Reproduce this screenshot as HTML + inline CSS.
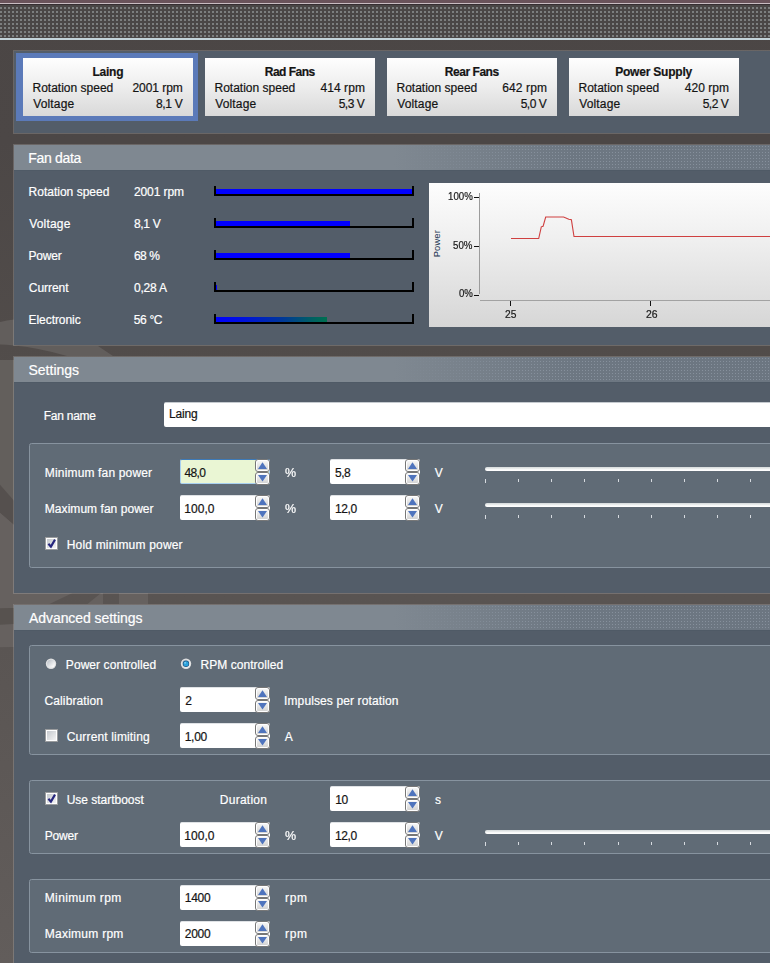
<!DOCTYPE html>
<html><head><meta charset="utf-8">
<style>
*{box-sizing:border-box;margin:0;padding:0}
html,body{width:770px;height:963px;overflow:hidden;background:#4b4645;font-family:"Liberation Sans",sans-serif;font-size:12px;color:#fff}
.abs{position:absolute}
.panel{position:absolute;left:13px;width:770px;background:#535d69;background-clip:padding-box;border:1px solid rgba(255,255,255,0.17)}
.hdr{position:absolute;left:0;top:0;width:770px;height:26px;background:linear-gradient(90deg,#7f8891 0,#7f8891 380px,#6d7782 560px,#6c7681 100%);border-bottom:1px solid #4f5a66}
.hdr i{position:absolute;left:1px;top:1px;width:760px;height:24px;background-image:radial-gradient(circle at 0.5px 0.5px,#86909c 0.55px,transparent 0.8px);background-size:3px 3px;-webkit-mask-image:linear-gradient(90deg,transparent 375px,#000 500px);mask-image:linear-gradient(90deg,transparent 375px,#000 500px)}
.t{position:absolute;white-space:pre;-webkit-text-stroke:0.2px currentColor}
.tab{position:absolute;top:58px;width:170px;height:58px;background:linear-gradient(#fefefe,#ededed 50%,#d9d9d9)}
.grp{position:absolute;left:29px;width:760px;background:#606b76;border:1px solid #87939f;border-radius:2.5px}
#root{position:absolute;left:0;top:0;width:770px;height:963px;overflow:hidden}
</style></head><body>
<div id="root">
<svg class="abs" style="left:0;top:0" width="770" height="963" viewBox="0 0 770 963">
<defs><linearGradient id="bgg" x1="0" y1="0" x2="0" y2="1"><stop offset="0" stop-color="#4b4645"/><stop offset="0.145" stop-color="#4c4746"/><stop offset="0.36" stop-color="#514c4a"/><stop offset="0.62" stop-color="#595452"/><stop offset="1" stop-color="#5e5957"/></linearGradient>
<linearGradient id="lsg" x1="0" y1="0" x2="0" y2="1"><stop offset="0" stop-color="#5a5553"/><stop offset="1" stop-color="#625d5b"/></linearGradient></defs>
<rect width="770" height="963" fill="url(#bgg)"/>
<!-- left strip / swooshes -->
<path d="M0 322 Q7 320 14 319.5 L14 346 L98 346 L113 356 L67 356 Q40 348 14 345.5 Q6 344.5 0 344.5 Z" fill="#625e5c"/>
<path d="M0 360 L14 360 L14 604 L0 604 Z" fill="#635f5c"/>
<path d="M0 484.7 L14 500.8 L14 525 L0 512.7 Z" fill="#55504e"/>
<path d="M0 513 L14 525 L14 608 L0 608.6 Z" fill="#66615f"/>
<path d="M0 593 L72.5 593 L49.5 604 L0 604 Z" fill="#66615f"/>
<path d="M101 593 L103 593 L103 604 L87.5 604 Z" fill="#66615f"/>
<path d="M119 593 L148 593 L148 604 L119 604 Z" fill="#66615f"/>
<path d="M0 608.6 L14 608 L14 624 L0 624.8 Z" fill="#57524f"/>
<path d="M0 624.8 L14 624 L14 647 L0 647.6 Z" fill="#66615f"/>
<path d="M0 647.6 L14 647 L14 963 L0 963 Z" fill="url(#lsg)"/>
</svg>
<div class="abs" style="left:0;top:0;width:770px;height:3px;background:#6a535b"></div>
<div class="abs" style="left:0;top:3px;width:770px;height:1px;background:#c9bcc2"></div>
<div class="abs" style="left:0;top:4px;width:770px;height:34px;background:#4a4646"></div>
<div class="abs" style="left:0;top:4px;width:770px;height:1px;background:#362e32"></div>
<svg class="abs" style="left:0;top:7px" width="770" height="30"><defs><pattern id="dp" width="4" height="4" patternUnits="userSpaceOnUse"><rect width="2" height="2" fill="#7c7e7f"/></pattern></defs><rect width="770" height="30" fill="url(#dp)"/></svg>
<div class="abs" style="left:0;top:38px;width:770px;height:2px;background:#c3d2d9"></div>
<!-- TABS -->
<div class="panel" style="top:50px;height:84px"></div>
<div class="abs" style="left:16px;top:53px;width:182px;height:68px;background:#5b7ab9"></div>
<div class="tab" style="left:23px"></div><div class="tab" style="left:205px"></div><div class="tab" style="left:387px"></div><div class="tab" style="left:569px"></div>
<!-- PANELS -->
<div class="panel" style="top:144px;height:202px"><div class="hdr"><i></i></div></div>
<div class="panel" style="top:356px;height:238px"><div class="hdr"><i></i></div></div>
<div class="panel" style="top:604px;height:380px"><div class="hdr"><i></i></div></div>
<div class="abs" style="left:164px;top:402px;width:620px;height:25px;background:#fff;border-radius:2px;border-top:1px solid #c5cacf"></div>
<div class="grp" style="top:443px;height:125px"></div>
<div class="grp" style="top:645px;height:110px"></div>
<div class="grp" style="top:780px;height:74px"></div>
<div class="grp" style="top:879px;height:74px"></div>
<div class="abs" style="left:429px;top:183px;width:360px;height:144px;background:linear-gradient(#fdfdfd,#efefef 40%,#d6d6d6)"></div>
<svg class="abs" style="left:429px;top:183px" width="341" height="144" viewBox="429 183 341 144">
<rect x="479" y="193" width="1" height="101" fill="#9c9c9c"/>
<rect x="480" y="300" width="300" height="1" fill="#a2a2a2"/>
<rect x="474" y="197" width="5" height="1" fill="#111"/><rect x="474" y="246" width="5" height="1" fill="#111"/><rect x="474" y="295" width="5" height="1" fill="#111"/>
<rect x="510" y="301" width="1" height="5" fill="#111"/><rect x="650" y="301" width="1" height="5" fill="#111"/>
<polyline fill="none" stroke="#cf4040" stroke-width="1.1" points="511,238.5 538.7,238.5 541.3,226.8 543.1,226.2 545.7,217 563.6,217 568.8,219.2 571.4,219.8 574,236.5 780,236.5"/>
<text transform="translate(439.9,257.3) rotate(-90)" font-family="Liberation Sans" font-size="9.4" fill="#17324f" letter-spacing="0.12">Power</text>
</svg>
<div class="abs" style="left:214px;top:186px;width:200px;height:10px;border:2px solid #000;border-top:none"></div><div class="abs" style="left:216px;top:189px;width:196px;height:5px;background:#0000ff"></div>
<div class="abs" style="left:214px;top:218px;width:200px;height:10px;border:2px solid #000;border-top:none"></div><div class="abs" style="left:216px;top:221px;width:134px;height:5px;background:#0000ff"></div>
<div class="abs" style="left:214px;top:250px;width:200px;height:10px;border:2px solid #000;border-top:none"></div><div class="abs" style="left:216px;top:253px;width:134px;height:5px;background:#0000ff"></div>
<div class="abs" style="left:214px;top:282px;width:200px;height:10px;border:2px solid #000;border-top:none"></div><div class="abs" style="left:216px;top:285px;width:1.3px;height:5px;background:#0000ff"></div>
<div class="abs" style="left:214px;top:314px;width:200px;height:10px;border:2px solid #000;border-top:none"></div><div class="abs" style="left:216px;top:317px;width:111px;height:5px;background:linear-gradient(90deg,#0000ff 0,#0012dc 25%,#003898 60%,#006260 88%,#007050 100%)"></div>
<div class="abs" style="left:180px;top:459px;width:90px;height:25px;background:#eaf6d4;border:1px solid #a8d0f0;border-top-color:#3d7ab8;border-radius:2px"></div><svg class="abs" style="left:255px;top:459px" width="15" height="26" viewBox="0 0 15 26">
<defs><linearGradient id="sg" x1="0" y1="0" x2="0" y2="1"><stop offset="0" stop-color="#f6f6f6"/><stop offset="1" stop-color="#d4d4d4"/></linearGradient></defs>
<rect x="0.5" y="0.5" width="14" height="12" rx="2.5" fill="#fff" stroke="#777"/>
<rect x="2" y="2" width="11" height="9" rx="1" fill="url(#sg)"/>
<rect x="0.5" y="13.5" width="14" height="12" rx="2.5" fill="#fff" stroke="#777"/>
<rect x="2" y="15" width="11" height="9" rx="1" fill="url(#sg)"/>
<path d="M3 10 L12 10 L7.5 3.2 Z" fill="#4f74bd"/>
<path d="M3 16 L12 16 L7.5 22.5 Z" fill="#4f74bd"/>
</svg>
<div class="abs" style="left:330px;top:459px;width:90px;height:25px;background:#fff;border-radius:2px;border-top:1px solid #dfe2e5"></div><svg class="abs" style="left:405px;top:459px" width="15" height="26" viewBox="0 0 15 26">
<defs><linearGradient id="sg" x1="0" y1="0" x2="0" y2="1"><stop offset="0" stop-color="#f6f6f6"/><stop offset="1" stop-color="#d4d4d4"/></linearGradient></defs>
<rect x="0.5" y="0.5" width="14" height="12" rx="2.5" fill="#fff" stroke="#777"/>
<rect x="2" y="2" width="11" height="9" rx="1" fill="url(#sg)"/>
<rect x="0.5" y="13.5" width="14" height="12" rx="2.5" fill="#fff" stroke="#777"/>
<rect x="2" y="15" width="11" height="9" rx="1" fill="url(#sg)"/>
<path d="M3 10 L12 10 L7.5 3.2 Z" fill="#4f74bd"/>
<path d="M3 16 L12 16 L7.5 22.5 Z" fill="#4f74bd"/>
</svg>
<div class="abs" style="left:180px;top:495px;width:90px;height:25px;background:#fff;border-radius:2px;border-top:1px solid #dfe2e5"></div><svg class="abs" style="left:255px;top:495px" width="15" height="26" viewBox="0 0 15 26">
<defs><linearGradient id="sg" x1="0" y1="0" x2="0" y2="1"><stop offset="0" stop-color="#f6f6f6"/><stop offset="1" stop-color="#d4d4d4"/></linearGradient></defs>
<rect x="0.5" y="0.5" width="14" height="12" rx="2.5" fill="#fff" stroke="#777"/>
<rect x="2" y="2" width="11" height="9" rx="1" fill="url(#sg)"/>
<rect x="0.5" y="13.5" width="14" height="12" rx="2.5" fill="#fff" stroke="#777"/>
<rect x="2" y="15" width="11" height="9" rx="1" fill="url(#sg)"/>
<path d="M3 10 L12 10 L7.5 3.2 Z" fill="#4f74bd"/>
<path d="M3 16 L12 16 L7.5 22.5 Z" fill="#4f74bd"/>
</svg>
<div class="abs" style="left:330px;top:495px;width:90px;height:25px;background:#fff;border-radius:2px;border-top:1px solid #dfe2e5"></div><svg class="abs" style="left:405px;top:495px" width="15" height="26" viewBox="0 0 15 26">
<defs><linearGradient id="sg" x1="0" y1="0" x2="0" y2="1"><stop offset="0" stop-color="#f6f6f6"/><stop offset="1" stop-color="#d4d4d4"/></linearGradient></defs>
<rect x="0.5" y="0.5" width="14" height="12" rx="2.5" fill="#fff" stroke="#777"/>
<rect x="2" y="2" width="11" height="9" rx="1" fill="url(#sg)"/>
<rect x="0.5" y="13.5" width="14" height="12" rx="2.5" fill="#fff" stroke="#777"/>
<rect x="2" y="15" width="11" height="9" rx="1" fill="url(#sg)"/>
<path d="M3 10 L12 10 L7.5 3.2 Z" fill="#4f74bd"/>
<path d="M3 16 L12 16 L7.5 22.5 Z" fill="#4f74bd"/>
</svg>
<div class="abs" style="left:180px;top:687px;width:90px;height:25px;background:#fff;border-radius:2px;border-top:1px solid #dfe2e5"></div><svg class="abs" style="left:255px;top:687px" width="15" height="26" viewBox="0 0 15 26">
<defs><linearGradient id="sg" x1="0" y1="0" x2="0" y2="1"><stop offset="0" stop-color="#f6f6f6"/><stop offset="1" stop-color="#d4d4d4"/></linearGradient></defs>
<rect x="0.5" y="0.5" width="14" height="12" rx="2.5" fill="#fff" stroke="#777"/>
<rect x="2" y="2" width="11" height="9" rx="1" fill="url(#sg)"/>
<rect x="0.5" y="13.5" width="14" height="12" rx="2.5" fill="#fff" stroke="#777"/>
<rect x="2" y="15" width="11" height="9" rx="1" fill="url(#sg)"/>
<path d="M3 10 L12 10 L7.5 3.2 Z" fill="#4f74bd"/>
<path d="M3 16 L12 16 L7.5 22.5 Z" fill="#4f74bd"/>
</svg>
<div class="abs" style="left:180px;top:723px;width:90px;height:25px;background:#fff;border-radius:2px;border-top:1px solid #dfe2e5"></div><svg class="abs" style="left:255px;top:723px" width="15" height="26" viewBox="0 0 15 26">
<defs><linearGradient id="sg" x1="0" y1="0" x2="0" y2="1"><stop offset="0" stop-color="#f6f6f6"/><stop offset="1" stop-color="#d4d4d4"/></linearGradient></defs>
<rect x="0.5" y="0.5" width="14" height="12" rx="2.5" fill="#fff" stroke="#777"/>
<rect x="2" y="2" width="11" height="9" rx="1" fill="url(#sg)"/>
<rect x="0.5" y="13.5" width="14" height="12" rx="2.5" fill="#fff" stroke="#777"/>
<rect x="2" y="15" width="11" height="9" rx="1" fill="url(#sg)"/>
<path d="M3 10 L12 10 L7.5 3.2 Z" fill="#4f74bd"/>
<path d="M3 16 L12 16 L7.5 22.5 Z" fill="#4f74bd"/>
</svg>
<div class="abs" style="left:330px;top:786px;width:90px;height:25px;background:#fff;border-radius:2px;border-top:1px solid #dfe2e5"></div><svg class="abs" style="left:405px;top:786px" width="15" height="26" viewBox="0 0 15 26">
<defs><linearGradient id="sg" x1="0" y1="0" x2="0" y2="1"><stop offset="0" stop-color="#f6f6f6"/><stop offset="1" stop-color="#d4d4d4"/></linearGradient></defs>
<rect x="0.5" y="0.5" width="14" height="12" rx="2.5" fill="#fff" stroke="#777"/>
<rect x="2" y="2" width="11" height="9" rx="1" fill="url(#sg)"/>
<rect x="0.5" y="13.5" width="14" height="12" rx="2.5" fill="#fff" stroke="#777"/>
<rect x="2" y="15" width="11" height="9" rx="1" fill="url(#sg)"/>
<path d="M3 10 L12 10 L7.5 3.2 Z" fill="#4f74bd"/>
<path d="M3 16 L12 16 L7.5 22.5 Z" fill="#4f74bd"/>
</svg>
<div class="abs" style="left:180px;top:822px;width:90px;height:25px;background:#fff;border-radius:2px;border-top:1px solid #dfe2e5"></div><svg class="abs" style="left:255px;top:822px" width="15" height="26" viewBox="0 0 15 26">
<defs><linearGradient id="sg" x1="0" y1="0" x2="0" y2="1"><stop offset="0" stop-color="#f6f6f6"/><stop offset="1" stop-color="#d4d4d4"/></linearGradient></defs>
<rect x="0.5" y="0.5" width="14" height="12" rx="2.5" fill="#fff" stroke="#777"/>
<rect x="2" y="2" width="11" height="9" rx="1" fill="url(#sg)"/>
<rect x="0.5" y="13.5" width="14" height="12" rx="2.5" fill="#fff" stroke="#777"/>
<rect x="2" y="15" width="11" height="9" rx="1" fill="url(#sg)"/>
<path d="M3 10 L12 10 L7.5 3.2 Z" fill="#4f74bd"/>
<path d="M3 16 L12 16 L7.5 22.5 Z" fill="#4f74bd"/>
</svg>
<div class="abs" style="left:330px;top:822px;width:90px;height:25px;background:#fff;border-radius:2px;border-top:1px solid #dfe2e5"></div><svg class="abs" style="left:405px;top:822px" width="15" height="26" viewBox="0 0 15 26">
<defs><linearGradient id="sg" x1="0" y1="0" x2="0" y2="1"><stop offset="0" stop-color="#f6f6f6"/><stop offset="1" stop-color="#d4d4d4"/></linearGradient></defs>
<rect x="0.5" y="0.5" width="14" height="12" rx="2.5" fill="#fff" stroke="#777"/>
<rect x="2" y="2" width="11" height="9" rx="1" fill="url(#sg)"/>
<rect x="0.5" y="13.5" width="14" height="12" rx="2.5" fill="#fff" stroke="#777"/>
<rect x="2" y="15" width="11" height="9" rx="1" fill="url(#sg)"/>
<path d="M3 10 L12 10 L7.5 3.2 Z" fill="#4f74bd"/>
<path d="M3 16 L12 16 L7.5 22.5 Z" fill="#4f74bd"/>
</svg>
<div class="abs" style="left:180px;top:885px;width:90px;height:25px;background:#fff;border-radius:2px;border-top:1px solid #dfe2e5"></div><svg class="abs" style="left:255px;top:885px" width="15" height="26" viewBox="0 0 15 26">
<defs><linearGradient id="sg" x1="0" y1="0" x2="0" y2="1"><stop offset="0" stop-color="#f6f6f6"/><stop offset="1" stop-color="#d4d4d4"/></linearGradient></defs>
<rect x="0.5" y="0.5" width="14" height="12" rx="2.5" fill="#fff" stroke="#777"/>
<rect x="2" y="2" width="11" height="9" rx="1" fill="url(#sg)"/>
<rect x="0.5" y="13.5" width="14" height="12" rx="2.5" fill="#fff" stroke="#777"/>
<rect x="2" y="15" width="11" height="9" rx="1" fill="url(#sg)"/>
<path d="M3 10 L12 10 L7.5 3.2 Z" fill="#4f74bd"/>
<path d="M3 16 L12 16 L7.5 22.5 Z" fill="#4f74bd"/>
</svg>
<div class="abs" style="left:180px;top:921px;width:90px;height:25px;background:#fff;border-radius:2px;border-top:1px solid #dfe2e5"></div><svg class="abs" style="left:255px;top:921px" width="15" height="26" viewBox="0 0 15 26">
<defs><linearGradient id="sg" x1="0" y1="0" x2="0" y2="1"><stop offset="0" stop-color="#f6f6f6"/><stop offset="1" stop-color="#d4d4d4"/></linearGradient></defs>
<rect x="0.5" y="0.5" width="14" height="12" rx="2.5" fill="#fff" stroke="#777"/>
<rect x="2" y="2" width="11" height="9" rx="1" fill="url(#sg)"/>
<rect x="0.5" y="13.5" width="14" height="12" rx="2.5" fill="#fff" stroke="#777"/>
<rect x="2" y="15" width="11" height="9" rx="1" fill="url(#sg)"/>
<path d="M3 10 L12 10 L7.5 3.2 Z" fill="#4f74bd"/>
<path d="M3 16 L12 16 L7.5 22.5 Z" fill="#4f74bd"/>
</svg>
<div class="abs" style="left:485px;top:467px;width:300px;height:4px;background:linear-gradient(#d4d9da,#e9ecec 38%,#fdfdfd 70%,#fff);border-radius:2px"></div><div class="abs" style="left:485px;top:479px;width:1px;height:4px;background:#d6dadf"></div><div class="abs" style="left:518px;top:479px;width:1px;height:3px;background:#d6dadf"></div><div class="abs" style="left:551px;top:479px;width:1px;height:3px;background:#d6dadf"></div><div class="abs" style="left:584px;top:479px;width:1px;height:3px;background:#d6dadf"></div><div class="abs" style="left:618px;top:479px;width:1px;height:3px;background:#d6dadf"></div><div class="abs" style="left:651px;top:479px;width:1px;height:3px;background:#d6dadf"></div><div class="abs" style="left:684px;top:479px;width:1px;height:3px;background:#d6dadf"></div><div class="abs" style="left:717px;top:479px;width:1px;height:3px;background:#d6dadf"></div><div class="abs" style="left:750px;top:479px;width:1px;height:3px;background:#d6dadf"></div>
<div class="abs" style="left:485px;top:503px;width:300px;height:4px;background:linear-gradient(#d4d9da,#e9ecec 38%,#fdfdfd 70%,#fff);border-radius:2px"></div><div class="abs" style="left:485px;top:515px;width:1px;height:4px;background:#d6dadf"></div><div class="abs" style="left:518px;top:515px;width:1px;height:3px;background:#d6dadf"></div><div class="abs" style="left:551px;top:515px;width:1px;height:3px;background:#d6dadf"></div><div class="abs" style="left:584px;top:515px;width:1px;height:3px;background:#d6dadf"></div><div class="abs" style="left:618px;top:515px;width:1px;height:3px;background:#d6dadf"></div><div class="abs" style="left:651px;top:515px;width:1px;height:3px;background:#d6dadf"></div><div class="abs" style="left:684px;top:515px;width:1px;height:3px;background:#d6dadf"></div><div class="abs" style="left:717px;top:515px;width:1px;height:3px;background:#d6dadf"></div><div class="abs" style="left:750px;top:515px;width:1px;height:3px;background:#d6dadf"></div>
<div class="abs" style="left:485px;top:830px;width:300px;height:4px;background:linear-gradient(#d4d9da,#e9ecec 38%,#fdfdfd 70%,#fff);border-radius:2px"></div><div class="abs" style="left:485px;top:842px;width:1px;height:4px;background:#d6dadf"></div><div class="abs" style="left:518px;top:842px;width:1px;height:3px;background:#d6dadf"></div><div class="abs" style="left:551px;top:842px;width:1px;height:3px;background:#d6dadf"></div><div class="abs" style="left:584px;top:842px;width:1px;height:3px;background:#d6dadf"></div><div class="abs" style="left:618px;top:842px;width:1px;height:3px;background:#d6dadf"></div><div class="abs" style="left:651px;top:842px;width:1px;height:3px;background:#d6dadf"></div><div class="abs" style="left:684px;top:842px;width:1px;height:3px;background:#d6dadf"></div><div class="abs" style="left:717px;top:842px;width:1px;height:3px;background:#d6dadf"></div><div class="abs" style="left:750px;top:842px;width:1px;height:3px;background:#d6dadf"></div>
<svg class="abs" style="left:45px;top:537px" width="13" height="13" viewBox="0 0 13 13">
<defs><linearGradient id="cg" x1="0" y1="0" x2="1" y2="1"><stop offset="0" stop-color="#c4c8cd"/><stop offset="1" stop-color="#f4f4f4"/></linearGradient></defs>
<rect x="0.5" y="0.5" width="12" height="12" fill="#fff" stroke="#9a9c9e"/>
<rect x="2" y="2" width="9" height="9" fill="url(#cg)"/><path d="M3.4 6.8 L5.9 9.6 L10 2.6" fill="none" stroke="#26267e" stroke-width="2.1" stroke-linejoin="miter"/></svg>
<svg class="abs" style="left:45px;top:729px" width="13" height="13" viewBox="0 0 13 13">
<defs><linearGradient id="cg" x1="0" y1="0" x2="1" y2="1"><stop offset="0" stop-color="#c4c8cd"/><stop offset="1" stop-color="#f4f4f4"/></linearGradient></defs>
<rect x="0.5" y="0.5" width="12" height="12" fill="#fff" stroke="#9a9c9e"/>
<rect x="2" y="2" width="9" height="9" fill="url(#cg)"/></svg>
<svg class="abs" style="left:45px;top:792px" width="13" height="13" viewBox="0 0 13 13">
<defs><linearGradient id="cg" x1="0" y1="0" x2="1" y2="1"><stop offset="0" stop-color="#c4c8cd"/><stop offset="1" stop-color="#f4f4f4"/></linearGradient></defs>
<rect x="0.5" y="0.5" width="12" height="12" fill="#fff" stroke="#9a9c9e"/>
<rect x="2" y="2" width="9" height="9" fill="url(#cg)"/><path d="M3.4 6.8 L5.9 9.6 L10 2.6" fill="none" stroke="#26267e" stroke-width="2.1" stroke-linejoin="miter"/></svg>
<svg class="abs" style="left:44px;top:657px" width="14" height="14" viewBox="0 0 14 14">
<defs><linearGradient id="rg" x1="0.15" y1="0.15" x2="0.85" y2="0.85"><stop offset="0" stop-color="#c2c7cd"/><stop offset="1" stop-color="#fbfbfb"/></linearGradient></defs>
<circle cx="7" cy="6.7" r="5.2" fill="#ececec" opacity="0.92"/><circle cx="7" cy="6.7" r="3.9" fill="url(#rg)"/></svg>
<svg class="abs" style="left:179px;top:657px" width="14" height="14" viewBox="0 0 14 14">
<defs><linearGradient id="rg" x1="0.15" y1="0.15" x2="0.85" y2="0.85"><stop offset="0" stop-color="#c2c7cd"/><stop offset="1" stop-color="#fbfbfb"/></linearGradient></defs>
<circle cx="7" cy="6.7" r="5.2" fill="#ececec" opacity="0.92"/><circle cx="7" cy="6.7" r="3.9" fill="url(#rg)"/><circle cx="7" cy="6.7" r="3.2" fill="#1c5685"/><circle cx="7" cy="6.7" r="2.5" fill="#2ba2dc"/><circle cx="6.1" cy="5.8" r="0.9" fill="#86d2f2"/></svg>
<div class="t" style="left:92.52px;top:64.84px;font-size:12px;line-height:14px;color:#141414;letter-spacing:-0.246px;font-weight:bold;">Laing</div>
<div class="t" style="left:32.53px;top:80.84px;font-size:12px;line-height:14px;color:#141414;">Rotation speed</div>
<div class="t" style="left:132.40px;top:80.84px;font-size:12px;line-height:14px;color:#141414;letter-spacing:-0.039px;">2001 rpm</div>
<div class="t" style="left:33.18px;top:96.84px;font-size:12px;line-height:14px;color:#141414;letter-spacing:0.169px;">Voltage</div>
<div class="t" style="left:155.96px;top:96.84px;font-size:12px;line-height:14px;color:#141414;letter-spacing:-0.329px;">8,1 V</div>
<div class="t" style="left:264.82px;top:64.84px;font-size:12px;line-height:14px;color:#141414;letter-spacing:-0.525px;font-weight:bold;">Rad Fans</div>
<div class="t" style="left:214.53px;top:80.84px;font-size:12px;line-height:14px;color:#141414;">Rotation speed</div>
<div class="t" style="left:320.45px;top:80.84px;font-size:12px;line-height:14px;color:#141414;letter-spacing:0.080px;">414 rpm</div>
<div class="t" style="left:215.18px;top:96.84px;font-size:12px;line-height:14px;color:#141414;letter-spacing:0.169px;">Voltage</div>
<div class="t" style="left:338.71px;top:96.84px;font-size:12px;line-height:14px;color:#141414;letter-spacing:-0.516px;">5,3 V</div>
<div class="t" style="left:444.87px;top:64.84px;font-size:12px;line-height:14px;color:#141414;letter-spacing:-0.472px;font-weight:bold;">Rear Fans</div>
<div class="t" style="left:396.53px;top:80.84px;font-size:12px;line-height:14px;color:#141414;">Rotation speed</div>
<div class="t" style="left:502.29px;top:80.84px;font-size:12px;line-height:14px;color:#141414;letter-spacing:0.107px;">642 rpm</div>
<div class="t" style="left:397.18px;top:96.84px;font-size:12px;line-height:14px;color:#141414;letter-spacing:0.169px;">Voltage</div>
<div class="t" style="left:520.71px;top:96.84px;font-size:12px;line-height:14px;color:#141414;letter-spacing:-0.516px;">5,0 V</div>
<div class="t" style="left:615.17px;top:64.84px;font-size:12px;line-height:14px;color:#141414;letter-spacing:-0.203px;font-weight:bold;">Power Supply</div>
<div class="t" style="left:578.53px;top:80.84px;font-size:12px;line-height:14px;color:#141414;">Rotation speed</div>
<div class="t" style="left:684.85px;top:80.84px;font-size:12px;line-height:14px;color:#141414;letter-spacing:0.013px;">420 rpm</div>
<div class="t" style="left:579.18px;top:96.84px;font-size:12px;line-height:14px;color:#141414;letter-spacing:0.169px;">Voltage</div>
<div class="t" style="left:702.71px;top:96.84px;font-size:12px;line-height:14px;color:#141414;letter-spacing:-0.516px;">5,2 V</div>
<div class="t" style="left:28.37px;top:150.15px;font-size:14px;line-height:16px;color:#fff;letter-spacing:-0.321px;">Fan data</div>
<div class="t" style="left:28.46px;top:362.15px;font-size:14px;line-height:16px;color:#fff;letter-spacing:0.009px;">Settings</div>
<div class="t" style="left:28.98px;top:610.15px;font-size:14px;line-height:16px;color:#fff;letter-spacing:-0.059px;">Advanced settings</div>
<div class="t" style="left:28.53px;top:184.84px;font-size:12px;line-height:14px;color:#fff;letter-spacing:0.011px;">Rotation speed</div>
<div class="t" style="left:133.90px;top:184.84px;font-size:12px;line-height:14px;color:#fff;letter-spacing:-0.068px;">2001 rpm</div>
<div class="t" style="left:29.18px;top:216.84px;font-size:12px;line-height:14px;color:#fff;letter-spacing:0.186px;">Voltage</div>
<div class="t" style="left:133.96px;top:216.84px;font-size:12px;line-height:14px;color:#fff;letter-spacing:-0.329px;">8,1 V</div>
<div class="t" style="left:28.53px;top:248.84px;font-size:12px;line-height:14px;color:#fff;letter-spacing:-0.175px;">Power</div>
<div class="t" style="left:133.89px;top:248.84px;font-size:12px;line-height:14px;color:#fff;letter-spacing:-0.453px;">68 %</div>
<div class="t" style="left:28.79px;top:280.84px;font-size:12px;line-height:14px;color:#fff;letter-spacing:-0.042px;">Current</div>
<div class="t" style="left:134.04px;top:280.84px;font-size:12px;line-height:14px;color:#fff;letter-spacing:-0.220px;">0,28 A</div>
<div class="t" style="left:28.53px;top:312.84px;font-size:12px;line-height:14px;color:#fff;letter-spacing:-0.057px;">Electronic</div>
<div class="t" style="left:133.81px;top:312.84px;font-size:12px;line-height:14px;color:#fff;letter-spacing:-0.353px;">56 °C</div>
<div class="t" style="left:43.63px;top:408.84px;font-size:12px;line-height:14px;color:#fff;letter-spacing:-0.234px;">Fan name</div>
<div class="t" style="left:169.03px;top:406.84px;font-size:12px;line-height:14px;color:#141414;letter-spacing:-0.149px;">Laing</div>
<div class="t" style="left:44.83px;top:465.84px;font-size:12px;line-height:14px;color:#fff;letter-spacing:0.161px;">Minimum fan power</div>
<div class="t" style="left:44.83px;top:501.84px;font-size:12px;line-height:14px;color:#fff;letter-spacing:0.044px;">Maximum fan power</div>
<div class="t" style="left:66.73px;top:537.84px;font-size:12px;line-height:14px;color:#fff;letter-spacing:0.187px;">Hold minimum power</div>
<div class="t" style="left:184.45px;top:465.84px;font-size:12px;line-height:14px;color:#141414;letter-spacing:-0.638px;">48,0</div>
<div class="t" style="left:184.37px;top:501.84px;font-size:12px;line-height:14px;color:#141414;letter-spacing:0.016px;">100,0</div>
<div class="t" style="left:335.11px;top:465.84px;font-size:12px;line-height:14px;color:#141414;letter-spacing:-0.545px;">5,8</div>
<div class="t" style="left:334.97px;top:501.84px;font-size:12px;line-height:14px;color:#141414;letter-spacing:-0.378px;">12,0</div>
<div class="t" style="left:284.82px;top:465.84px;font-size:12px;line-height:14px;color:#fff;transform:scaleX(1.0402);transform-origin:0 0;">%</div>
<div class="t" style="left:284.82px;top:501.84px;font-size:12px;line-height:14px;color:#fff;transform:scaleX(1.0402);transform-origin:0 0;">%</div>
<div class="t" style="left:434.78px;top:465.84px;font-size:12px;line-height:14px;color:#fff;">V</div>
<div class="t" style="left:434.78px;top:501.84px;font-size:12px;line-height:14px;color:#fff;">V</div>
<div class="t" style="left:65.83px;top:657.84px;font-size:12px;line-height:14px;color:#fff;letter-spacing:0.067px;">Power controlled</div>
<div class="t" style="left:200.53px;top:657.84px;font-size:12px;line-height:14px;color:#fff;letter-spacing:0.044px;">RPM controlled</div>
<div class="t" style="left:44.59px;top:693.84px;font-size:12px;line-height:14px;color:#fff;letter-spacing:0.094px;">Calibration</div>
<div class="t" style="left:185.30px;top:693.84px;font-size:12px;line-height:14px;color:#141414;">2</div>
<div class="t" style="left:284.06px;top:693.84px;font-size:12px;line-height:14px;color:#fff;letter-spacing:0.115px;">Impulses per rotation</div>
<div class="t" style="left:66.69px;top:729.84px;font-size:12px;line-height:14px;color:#fff;letter-spacing:0.152px;">Current limiting</div>
<div class="t" style="left:184.67px;top:729.84px;font-size:12px;line-height:14px;color:#141414;letter-spacing:-0.245px;">1,00</div>
<div class="t" style="left:284.78px;top:729.84px;font-size:12px;line-height:14px;color:#fff;">A</div>
<div class="t" style="left:66.67px;top:792.84px;font-size:12px;line-height:14px;color:#fff;letter-spacing:-0.015px;">Use startboost</div>
<div class="t" style="left:219.83px;top:792.84px;font-size:12px;line-height:14px;color:#fff;letter-spacing:0.243px;">Duration</div>
<div class="t" style="left:335.17px;top:792.84px;font-size:12px;line-height:14px;color:#141414;letter-spacing:-0.334px;">10</div>
<div class="t" style="left:434.95px;top:792.84px;font-size:12px;line-height:14px;color:#fff;">s</div>
<div class="t" style="left:44.63px;top:828.84px;font-size:12px;line-height:14px;color:#fff;letter-spacing:-0.150px;">Power</div>
<div class="t" style="left:184.37px;top:828.84px;font-size:12px;line-height:14px;color:#141414;letter-spacing:0.016px;">100,0</div>
<div class="t" style="left:284.82px;top:828.84px;font-size:12px;line-height:14px;color:#fff;transform:scaleX(1.0402);transform-origin:0 0;">%</div>
<div class="t" style="left:334.97px;top:828.84px;font-size:12px;line-height:14px;color:#141414;letter-spacing:-0.378px;">12,0</div>
<div class="t" style="left:434.78px;top:828.84px;font-size:12px;line-height:14px;color:#fff;">V</div>
<div class="t" style="left:44.73px;top:890.84px;font-size:12px;line-height:14px;color:#fff;letter-spacing:0.380px;">Minimum rpm</div>
<div class="t" style="left:44.73px;top:926.84px;font-size:12px;line-height:14px;color:#fff;letter-spacing:0.260px;">Maximum rpm</div>
<div class="t" style="left:184.77px;top:890.84px;font-size:12px;line-height:14px;color:#141414;letter-spacing:-0.303px;">1400</div>
<div class="t" style="left:184.80px;top:926.84px;font-size:12px;line-height:14px;color:#141414;letter-spacing:-0.313px;">2000</div>
<div class="t" style="left:284.96px;top:890.84px;font-size:12px;line-height:14px;color:#fff;letter-spacing:0.734px;">rpm</div>
<div class="t" style="left:284.96px;top:926.84px;font-size:12px;line-height:14px;color:#fff;letter-spacing:0.734px;">rpm</div>
<div class="t" style="left:447.82px;top:190.94px;font-size:10px;line-height:12px;color:#1a1a1a;transform:scaleX(0.9680);transform-origin:0 0;">100%</div>
<div class="t" style="left:453.43px;top:239.94px;font-size:10px;line-height:12px;color:#1a1a1a;transform:scaleX(0.9695);transform-origin:0 0;">50%</div>
<div class="t" style="left:458.58px;top:287.94px;font-size:10px;line-height:12px;color:#1a1a1a;transform:scaleX(0.9661);transform-origin:0 0;">0%</div>
<div class="t" style="left:505.48px;top:308.94px;font-size:10px;line-height:12px;color:#1a1a1a;transform:scaleX(1.0205);transform-origin:0 0;">25</div>
<div class="t" style="left:645.57px;top:308.94px;font-size:10px;line-height:12px;color:#1a1a1a;transform:scaleX(1.0402);transform-origin:0 0;">26</div>
</div>
</body></html>
